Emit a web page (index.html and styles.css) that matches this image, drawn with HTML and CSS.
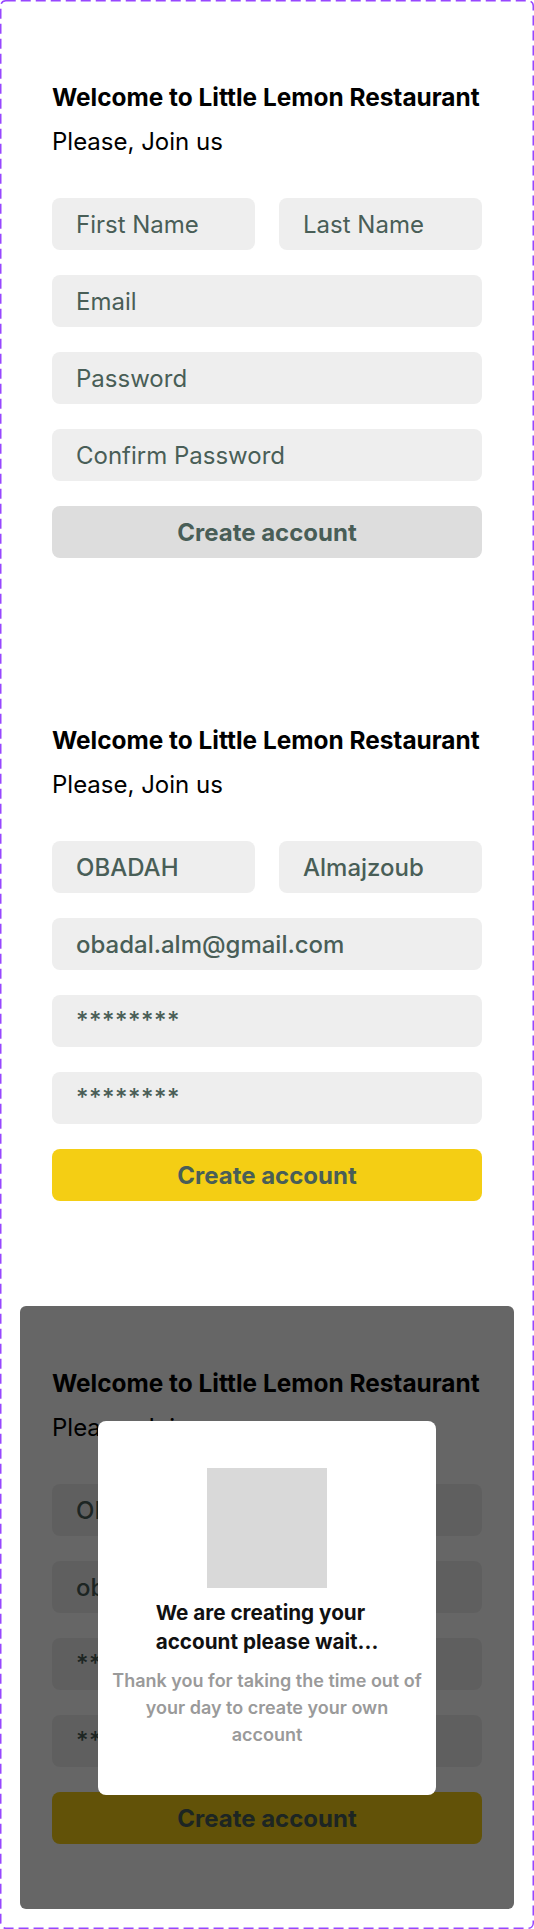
FILE: index.html
```html
<!DOCTYPE html>
<html lang="en">
<head>
<meta charset="utf-8">
<title>Little Lemon – Create account</title>
<link rel="stylesheet" href="styles.css">
</head>
<body>
<div class="canvas">
  <svg class="dash-frame" width="534" height="1929" viewBox="0 0 534 1929" aria-hidden="true">
    <rect x="0.75" y="0.75" width="532.5" height="1927.5" rx="5" ry="5" fill="none" stroke="#9747FF" stroke-width="1.5" stroke-dasharray="10 5"/>
  </svg>

  <section class="frame">
    <header class="intro">
      <h1 class="title">Welcome to Little Lemon Restaurant</h1>
      <p class="subtitle">Please, Join us</p>
    </header>
    <form class="form">
      <div class="row">
        <input class="field" type="text" placeholder="First Name">
        <input class="field" type="text" placeholder="Last Name">
      </div>
      <input class="field" type="text" placeholder="Email">
      <input class="field" type="text" placeholder="Password">
      <input class="field" type="text" placeholder="Confirm Password">
      <button class="btn btn-disabled" type="button">Create account</button>
    </form>
  </section>

  <section class="frame">
    <header class="intro">
      <h1 class="title">Welcome to Little Lemon Restaurant</h1>
      <p class="subtitle">Please, Join us</p>
    </header>
    <form class="form">
      <div class="row">
        <input class="field filled" type="text" value="OBADAH">
        <input class="field filled" type="text" value="Almajzoub">
      </div>
      <input class="field filled" type="text" value="obadal.alm@gmail.com">
      <input class="field filled secret" type="text" value="********">
      <input class="field filled secret" type="text" value="********">
      <button class="btn btn-active" type="button">Create account</button>
    </form>
  </section>

  <section class="frame loading">
    <header class="intro">
      <h1 class="title">Welcome to Little Lemon Restaurant</h1>
      <p class="subtitle">Please, Join us</p>
    </header>
    <form class="form">
      <div class="row">
        <input class="field filled" type="text" value="OBADAH">
        <input class="field filled" type="text" value="Almajzoub">
      </div>
      <input class="field filled" type="text" value="obadal.alm@gmail.com">
      <input class="field filled secret" type="text" value="********">
      <input class="field filled secret" type="text" value="********">
      <button class="btn btn-active" type="button">Create account</button>
    </form>
    <div class="overlay">
      <div class="modal" role="dialog">
        <div class="modal-image"></div>
        <h2 class="modal-title">We are creating your<br>account please wait...</h2>
        <p class="modal-text">Thank you for taking the time out of<br>your day to create your own<br>account</p>
      </div>
    </div>
  </section>
</div>
</body>
</html>
```

FILE: styles.css
```css
* {
  box-sizing: border-box;
}

html, body {
  margin: 0;
  padding: 0;
  background: #ffffff;
}

body {
  font-family: Inter, "Noto Sans", "Liberation Sans", sans-serif;
  color: #000;
}

.canvas {
  position: relative;
  width: 534px;
  height: 1929px;
  padding: 20px;
  display: flex;
  flex-direction: column;
  gap: 40px;
}

.dash-frame {
  position: absolute;
  left: 0;
  top: 0;
  pointer-events: none;
}

.frame {
  position: relative;
  width: 494px;
  height: 603px;
  flex: none;
  padding: 62px 32px 0;
  border-radius: 6px;
  background: #fff;
}

.intro {
  display: flex;
  flex-direction: column;
  gap: 15px;
}

.title {
  margin: 0;
  font-size: 24.4px;
  line-height: 30px;
  font-weight: 700;
  color: #000;
  white-space: nowrap;
}

.subtitle {
  margin: 0;
  font-size: 24px;
  line-height: 30px;
  font-weight: 400;
  color: #000;
}

.form {
  margin-top: 41px;
  display: flex;
  flex-direction: column;
  gap: 25px;
}

.row {
  display: grid;
  grid-template-columns: 1fr 1fr;
  gap: 24px;
}

.field {
  display: block;
  width: 100%;
  height: 52px;
  margin: 0;
  padding: 0 24px;
  border: none;
  border-radius: 8px;
  background: #eeeeee;
  font-family: inherit;
  font-size: 24px;
  font-weight: 400;
  color: #495E57;
  outline: none;
}

.field::placeholder {
  color: #495E57;
  opacity: 1;
}

.field.filled {
  font-weight: 500;
}

.field.secret {
  letter-spacing: 0.5px;
  padding-bottom: 2px;
}

.btn {
  display: block;
  width: 100%;
  height: 52px;
  margin: 0;
  border: none;
  border-radius: 8px;
  font-family: inherit;
  font-size: 24px;
  font-weight: 700;
  color: #495E57;
  cursor: pointer;
}

.btn-disabled {
  background: #dddddd;
}

.btn-active {
  background: #F4CE14;
}

.overlay {
  position: absolute;
  inset: 0;
  border-radius: 6px;
  background: rgba(0, 0, 0, 0.6);
  display: flex;
  align-items: center;
  justify-content: center;
}

.modal {
  width: 338px;
  height: 374px;
  padding: 47px 10px 0;
  border-radius: 8px;
  background: #fff;
  display: flex;
  flex-direction: column;
  align-items: center;
}

.modal-image {
  width: 120px;
  height: 120px;
  background: #d9d9d9;
  flex: none;
}

.modal-title {
  margin: 10px 0 0;
  font-size: 20.7px;
  line-height: 29px;
  font-weight: 700;
  color: #111;
  text-align: left;
}

.modal-text {
  margin: 11px 0 0;
  font-size: 18px;
  line-height: 27px;
  font-weight: 600;
  color: #9a9a9a;
  text-align: center;
  white-space: nowrap;
}
```
